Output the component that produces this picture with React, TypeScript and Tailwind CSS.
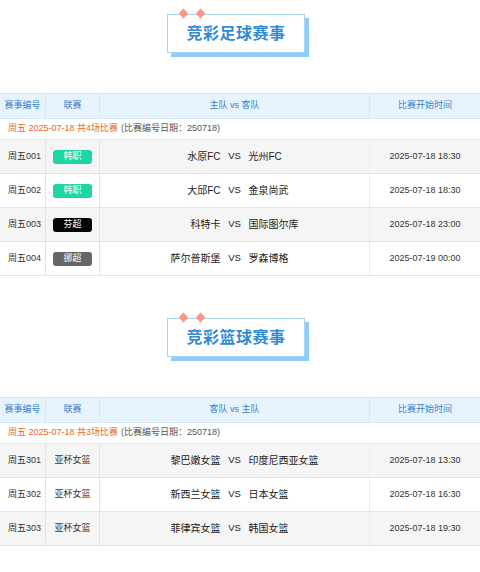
import React from "react"

type Match = {
  no: string
  league: string
  badge?: string
  home: string
  away: string
  time: string
}

const football: Match[] = [
  { no: "周五001", league: "韩职", badge: "bg-[#1dd6a3]", home: "水原FC", away: "光州FC", time: "2025-07-18 18:30" },
  { no: "周五002", league: "韩职", badge: "bg-[#1dd6a3]", home: "大邱FC", away: "金泉尚武", time: "2025-07-18 18:30" },
  { no: "周五003", league: "芬超", badge: "bg-[#050505]", home: "科特卡", away: "国际图尔库", time: "2025-07-18 23:00" },
  { no: "周五004", league: "挪超", badge: "bg-[#666666]", home: "萨尔普斯堡", away: "罗森博格", time: "2025-07-19 00:00" },
]

const basketball: Match[] = [
  { no: "周五301", league: "亚杯女篮", home: "黎巴嫩女篮", away: "印度尼西亚女篮", time: "2025-07-18 13:30" },
  { no: "周五302", league: "亚杯女篮", home: "新西兰女篮", away: "日本女篮", time: "2025-07-18 16:30" },
  { no: "周五303", league: "亚杯女篮", home: "菲律宾女篮", away: "韩国女篮", time: "2025-07-18 19:30" },
]

const font = { fontFamily: '"Liberation Sans", "Noto Sans CJK SC", sans-serif' }

function Title({ text }: { text: string }) {
  return (
    <div className="flex justify-center pt-[14px]">
      <div className="relative mr-[8px] w-[138px] h-[39px] border border-[#a6d5f7] bg-white shadow-[4px_4px_0_#8dcdf9] flex items-center justify-center">
        <span className="absolute -top-[5px] left-[12px] w-[7px] h-[7px] rotate-45 bg-[#f79a8a]" />
        <span className="absolute -top-[5px] left-[29px] w-[7px] h-[7px] rotate-45 bg-[#f79a8a]" />
        <span className="text-[16px] font-bold text-[#2f8bd4] tracking-[0.5px]">{text}</span>
      </div>
    </div>
  )
}

function Table({ head, info, rows }: { head: string; info: string; rows: Match[] }) {
  const cols = "grid grid-cols-[46px_54px_1fr_110px]"
  return (
    <div className="mt-[40px] border-t border-[#d3e7f7]">
      <div className={`${cols} h-[25px] bg-[#e7f4fd] text-[9px] text-[#3a7fc6] border-b border-[#d3e7f7]`}>
        <div className="flex items-center justify-center border-r border-[#d3e7f7] whitespace-nowrap">赛事编号</div>
        <div className="flex items-center justify-center border-r border-[#d3e7f7]">联赛</div>
        <div className="flex items-center justify-center border-r border-[#d3e7f7]">{head}</div>
        <div className="flex items-center justify-center">比赛开始时间</div>
      </div>
      <div className="h-[21px] flex items-center px-[8px] text-[9px] border-b border-[#dde9f3] whitespace-nowrap">
        <span className="text-[#f0661e]">{info}</span>
        <span className="text-[#555] ml-[3px]">(比赛编号日期：250718)</span>
      </div>
      {rows.map((r, i) => (
        <div
          key={r.no}
          className={`${cols} h-[34px] border-b border-[#d8e6f1] ${i % 2 === 0 ? "bg-[#f5f5f5]" : "bg-white"}`}
        >
          <div className="flex items-center pl-[8px] text-[9px] text-[#333] border-r border-[#d8e6f1] whitespace-nowrap">{r.no}</div>
          <div className="flex items-center justify-center border-r border-[#d8e6f1]">
            {r.badge ? (
              <span className={`${r.badge} w-[39px] h-[14px] rounded-[3px] text-white text-[9px] flex items-center justify-center`}>
                {r.league}
              </span>
            ) : (
              <span className="text-[9px] text-[#333]">{r.league}</span>
            )}
          </div>
          <div className="flex items-center text-[10px] text-[#222] border-r border-[#e6eef5] whitespace-nowrap">
            <span className="flex-1 text-right">{r.home}</span>
            <span className="w-[28px] text-center text-[9.5px]">VS</span>
            <span className="flex-1 text-left">{r.away}</span>
          </div>
          <div className="flex items-center justify-center text-[9px] text-[#333] whitespace-nowrap">{r.time}</div>
        </div>
      ))}
    </div>
  )
}

export default function App() {
  return (
    <div className="w-[480px] h-[572px] bg-white overflow-hidden" style={font}>
      <Title text="竞彩足球赛事" />
      <Table head="主队 vs 客队" info="周五 2025-07-18 共4场比赛" rows={football} />
      <div className="h-[28px]" />
      <Title text="竞彩篮球赛事" />
      <Table head="客队 vs 主队" info="周五 2025-07-18 共3场比赛" rows={basketball} />
    </div>
  )
}
